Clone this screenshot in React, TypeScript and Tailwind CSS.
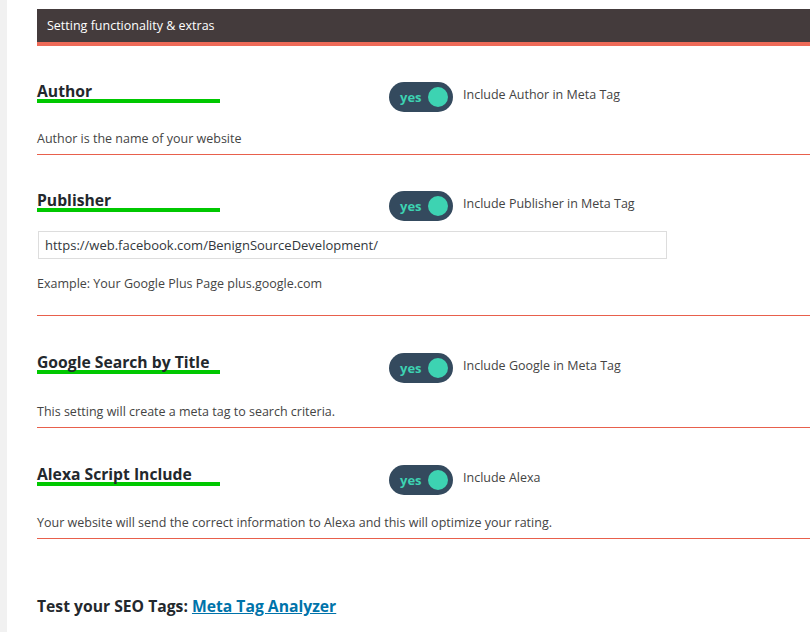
import React from "react";

const FONT = { fontFamily: '"Open Sans", "Noto Sans", sans-serif' };

function Toggle() {
  return (
    <div className="flex items-center justify-between w-[64px] h-[30px] rounded-full bg-[#344a5e] pl-[11px] pr-[5px]">
      <span className="text-[13px] font-bold text-[#3dd3b2] leading-none">yes</span>
      <span className="w-[20px] h-[20px] rounded-full bg-[#3dd3b2]" />
    </div>
  );
}

function SettingRow({ title, label }: { title: string; label: string }) {
  return (
    <div className="flex items-start h-[30px]">
      <div className="w-[352px] shrink-0 pt-[1px]">
        <h3 className="w-[183px] border-b-4 border-[#00c800] text-[15.7px] font-bold leading-[16px] text-[#23282d] whitespace-nowrap">
          {title}
        </h3>
      </div>
      <Toggle />
      <span className="ml-[10px] mt-[4px] text-[12.5px] leading-[18px] text-[#444]">{label}</span>
    </div>
  );
}

export default function App() {
  return (
    <div className="flex min-h-[632px] bg-white overflow-hidden" style={FONT}>
      <div className="w-[7px] shrink-0 bg-[#f1f1f1]" />
      <div className="flex-1 pl-[30px] pt-[9px]">
        <div className="h-[37px] bg-[#443b3c] border-b-4 border-[#ee6a58] flex items-center pl-[10px] pt-[2px]">
          <span className="text-[12.5px] text-white">Setting functionality &amp; extras</span>
        </div>

        <section className="pt-[36px] pb-[5px] border-b border-[#e8604c]">
          <SettingRow title="Author" label="Include Author in Meta Tag" />
          <p className="mt-[17px] text-[12.5px] leading-[20px] text-[#444]">Author is the name of your website</p>
        </section>

        <section className="pt-[36px] pb-[21px] border-b border-[#e8604c]">
          <SettingRow title="Publisher" label="Include Publisher in Meta Tag" />
          <input
            readOnly
            value="https://web.facebook.com/BenignSourceDevelopment/"
            className="mt-[10px] ml-[1px] block w-[629px] h-[28px] border border-[#ddd] px-[6px] text-[13px] text-[#32373c] outline-none"
            style={FONT}
          />
          <p className="mt-[15px] text-[12.5px] leading-[20px] text-[#444]">
            Example: Your Google Plus Page plus.google.com
          </p>
        </section>

        <section className="pt-[37px] pb-[5px] border-b border-[#e8604c]">
          <SettingRow title="Google Search by Title" label="Include Google in Meta Tag" />
          <p className="mt-[19px] text-[12.5px] leading-[20px] text-[#444]">
            This setting will create a meta tag to search criteria.
          </p>
        </section>

        <section className="pt-[37px] pb-[5px] border-b border-[#e8604c]">
          <SettingRow title="Alexa Script Include" label="Include Alexa" />
          <p className="mt-[18px] text-[12.5px] leading-[20px] text-[#444]">
            Your website will send the correct information to Alexa and this will optimize your rating.
          </p>
        </section>

        <p className="mt-[57px] text-[15.7px] font-bold text-[#23282d] leading-[20px]">
          Test your SEO Tags:{" "}
          <a href="#" className="text-[#0073aa] underline">Meta Tag Analyzer</a>
        </p>
      </div>
    </div>
  );
}
